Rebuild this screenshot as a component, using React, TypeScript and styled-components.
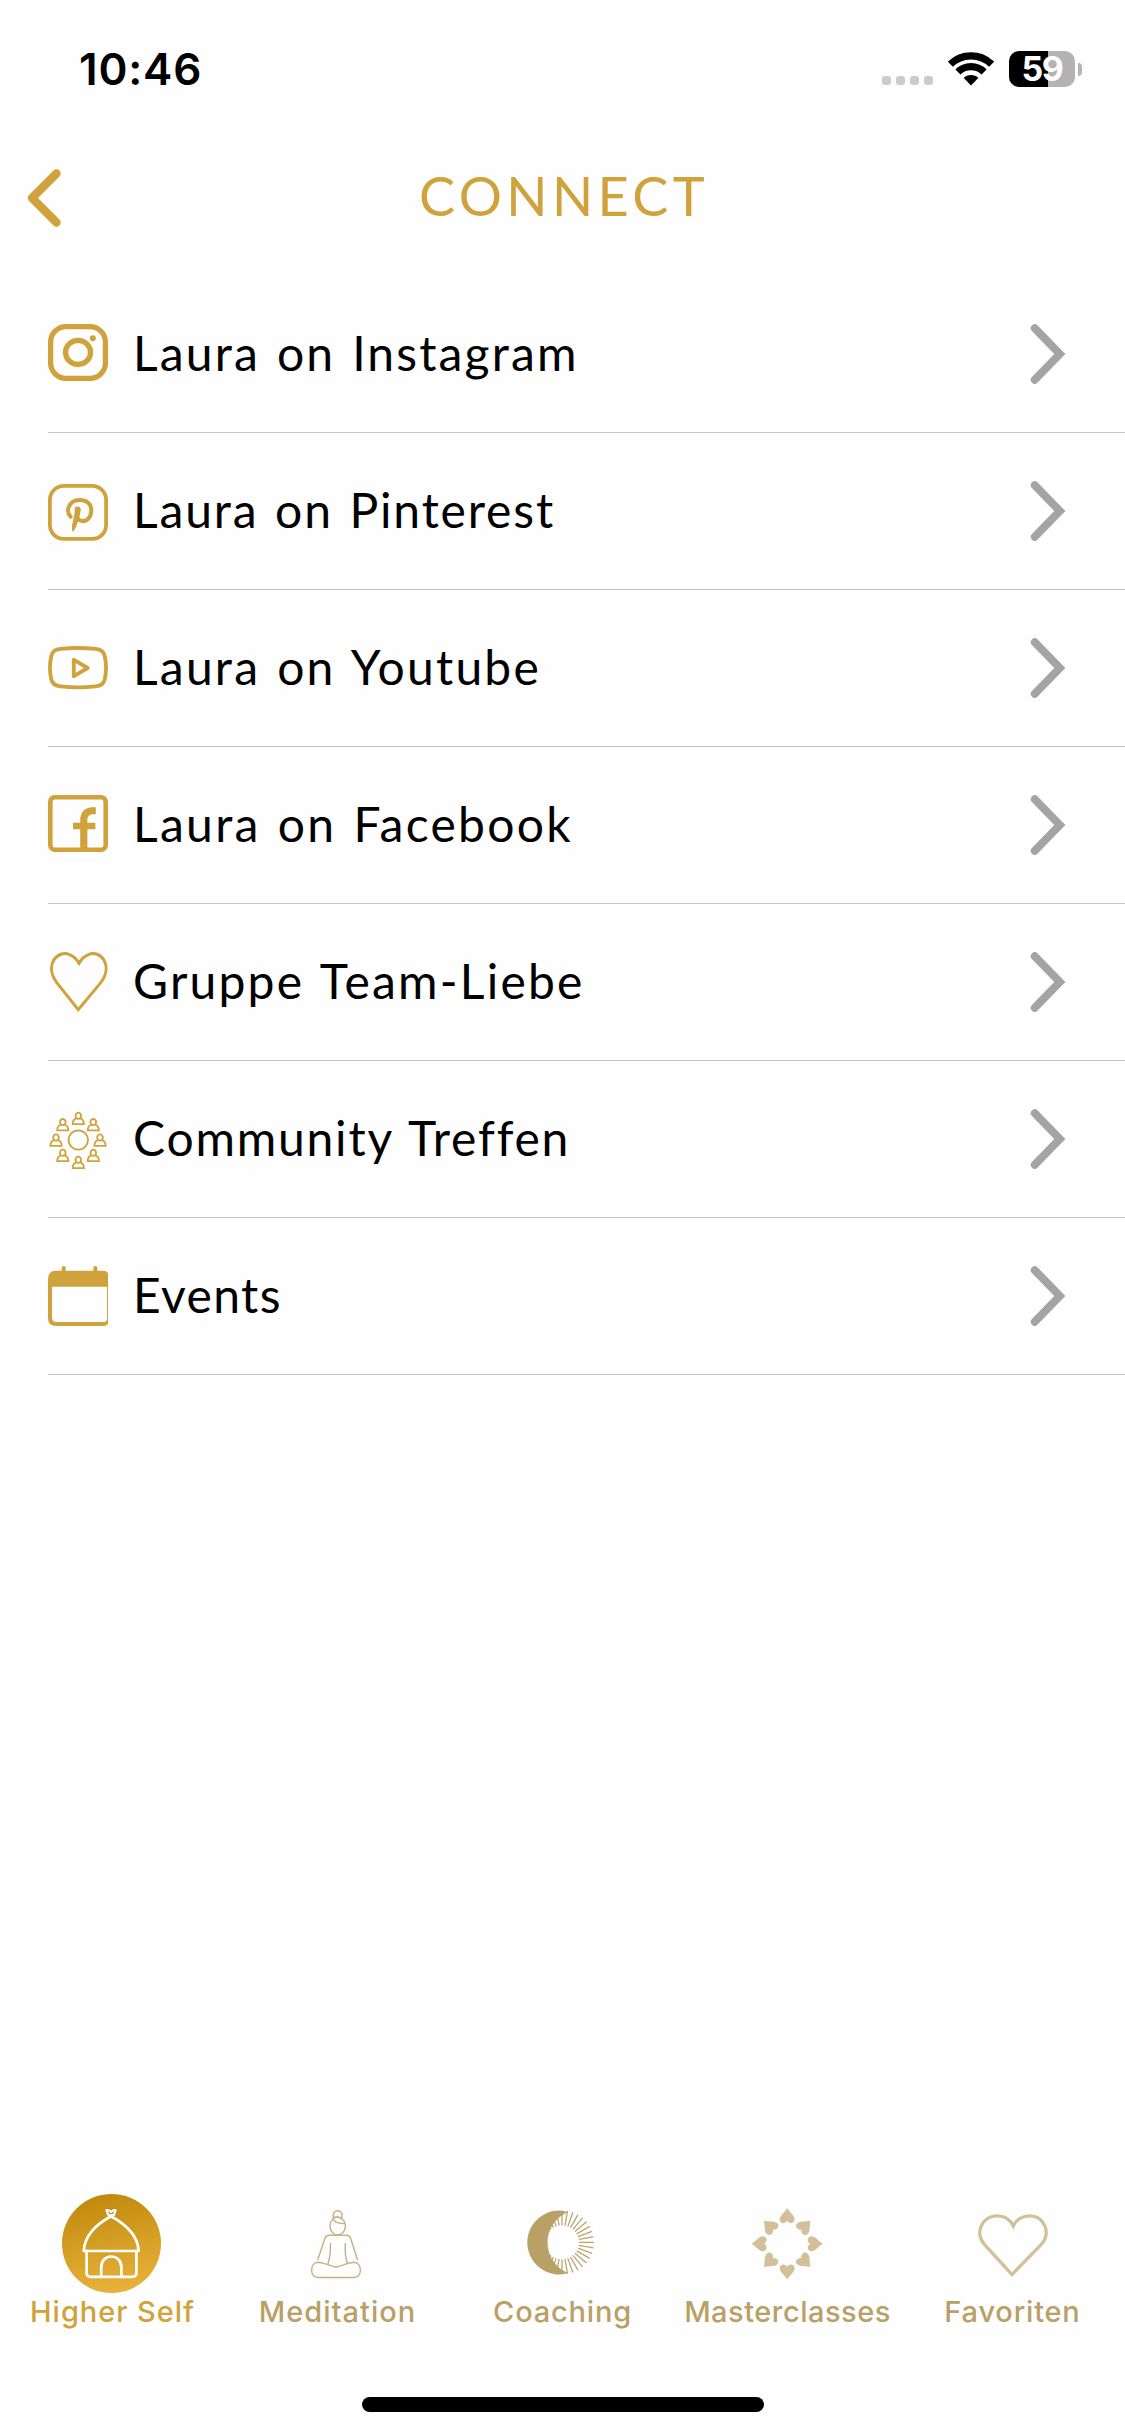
import React from "react";
import styled, { createGlobalStyle } from "styled-components";

const gold = "#cfa23c";
const sand = "#b9a067";
const paleSand = "#d3c09a";

const GlobalStyle = createGlobalStyle`
  html, body { margin: 0; padding: 0; background: #fefefe; }
  * { box-sizing: border-box; }
`;

const Screen = styled.div`
  display: flex;
  flex-direction: column;
  width: 1125px;
  height: 2436px;
  background: #fefefe;
  overflow: hidden;
`;

const StatusBar = styled.div`
  display: flex;
  align-items: center;
  justify-content: space-between;
  height: 138px;
  padding: 0 43px 0 79px;
`;

const Clock = styled.span`
  font: 600 44px/44px Inter, "Liberation Sans", sans-serif;
  letter-spacing: 0.8px;
  color: #000;
`;

const StatusIcons = styled.div`
  display: flex;
  align-items: center;
`;

const SignalDots = styled.div`
  display: flex;
  gap: 5px;
  margin: 23px 15px 0 0;
`;

const SignalDot = styled.span`
  width: 9px;
  height: 9px;
  border-radius: 3px;
  background: #cbcbcb;
`;

const WifiIcon = styled.svg`
  width: 46px;
  height: 34px;
  margin-right: 15px;
`;

const Battery = styled.div`
  display: flex;
  align-items: center;
  justify-content: center;
  width: 66px;
  height: 36px;
  border-radius: 10px;
  background: linear-gradient(90deg, #000 59%, #b3b3b3 59%);
  font: 700 34px/36px Inter, "Liberation Sans", sans-serif;
  letter-spacing: -1.4px;
  color: #fff;
`;

const BatteryNub = styled.span`
  width: 4px;
  height: 13px;
  margin-left: 3px;
  border-radius: 0 4px 4px 0;
  background: #b3b3b3;
`;

const Header = styled.header`
  display: grid;
  grid-template-columns: 120px 1fr 120px;
  align-items: center;
  height: 138px;
  padding-bottom: 18px;
`;

const BackIcon = styled.svg`
  width: 40px;
  height: 60px;
  margin-left: 24px;
`;

const Title = styled.h1`
  margin: 0;
  padding: 0 0 4px 3px;
  text-align: center;
  font: 400 54px/60px Lato, "Noto Sans", sans-serif;
  letter-spacing: 4.4px;
  color: ${gold};
`;

const List = styled.ul`
  flex: 1;
  margin: 0;
  padding: 0 0 0 48px;
  list-style: none;
`;

const Row = styled.li`
  display: flex;
  align-items: center;
  height: 157px;
  padding-right: 58px;
  border-bottom: 1px solid #c4c4c5;
`;

const RowIcon = styled.svg`
  flex: none;
  width: 60px;
  height: 60px;
  margin-right: 25px;
`;

const RowLabel = styled.span<{ $tracking: number }>`
  flex: 1;
  padding-bottom: 3px;
  white-space: nowrap;
  font: 400 48px/60px Lato, "Noto Sans", sans-serif;
  letter-spacing: ${(p) => p.$tracking}px;
  word-spacing: 2.5px;
  color: #000;
`;

const Chevron = styled.svg`
  flex: none;
  width: 38px;
  height: 60px;
`;

const TabBar = styled.nav`
  display: grid;
  grid-template-columns: repeat(5, 1fr);
  height: 203px;
`;

const Tab = styled.div<{ $active?: boolean }>`
  display: flex;
  flex-direction: column;
  align-items: center;
  font: 500 29px/38px Inter, "Liberation Sans", sans-serif;
  color: ${(p) => (p.$active ? gold : sand)};
`;

const TabIcon = styled.svg<{ $active?: boolean }>`
  width: 99px;
  height: 99px;
  margin-right: ${(p) => (p.$active ? 2 : 0)}px;
`;

const TabLabel = styled.span<{ $tracking: number }>`
  letter-spacing: ${(p) => p.$tracking}px;
  white-space: nowrap;
`;

const HomeArea = styled.div`
  display: flex;
  justify-content: center;
  height: 39px;
`;

const HomeIndicator = styled.span`
  width: 402px;
  height: 15px;
  border-radius: 8px;
  background: #000;
`;

const Instagram = () => (
  <g fill="none" stroke={gold} strokeWidth="5.3">
    <rect x="2.6" y="2.6" width="54.8" height="51.8" rx="15.5" />
    <ellipse cx="30" cy="28.4" rx="12.5" ry="12.1" />
    <circle cx="44.8" cy="14.3" r="3" fill={gold} stroke="none" />
  </g>
);

const Pinterest = () => (
  <g fill="none" stroke={gold}>
    <rect x="1.9" y="4.9" width="56.2" height="53" rx="14" strokeWidth="3.8" />
    <path d="M22.6 35.9C20.3 33.4 19.6 29.6 20.6 26.3C22.2 21.5 26.4 18.9 31.8 18.9C38.6 18.9 43.3 23 43.3 29C43.3 35.5 39.6 40.1 34.8 40.1C32 40.1 30 38.8 28.7 36.6" strokeWidth="4" strokeLinecap="round" />
    <path d="M26.6 27.5C27.2 24.6 33 24.4 32.8 29L31.4 36.5L28.8 43.8C28 46.6 26.6 49.2 24.9 51C23.8 49.2 23.7 46.3 24.2 43.5L26.8 31Z" fill={gold} stroke="none" />
  </g>
);

const Youtube = () => (
  <g fill="none" stroke={gold} strokeWidth="3.8" strokeLinejoin="round">
    <path d="M12.5 10.9Q30 9.1 47.5 10.9Q55.4 11.6 56.7 18Q59.4 29.7 56.7 41.5Q55.3 47.7 47.5 48.4Q30 50.2 12.5 48.4Q4.7 47.7 3.3 41.5Q.6 29.7 3.3 18Q4.6 11.6 12.5 10.9Z" />
    <path d="M25.8 21.8V38.2L39.7 30Z" />
  </g>
);

const Facebook = () => (
  <g>
    <rect x="2.3" y="2.3" width="55.4" height="52.4" rx="4.5" fill="none" stroke={gold} strokeWidth="4.6" />
    <path d="M32.2 55V34.3H25V27.7H32.2V25.5C32.2 17 37 12.2 44.5 12.2H47.8V19.3H45C41.4 19.3 39.4 21.4 39.4 25V27.7H47.4V34.3H39.4V55Z" fill={gold} />
  </g>
);

const HeartOutline = () => (
  <path d="M30.2 57.6L8.6 30.4C-4 13 9.5-3 22 2.8C26 4.4 29 7.6 31 11.2C33 7.6 36 4.4 40 2.8C52.5-3 65.5 13 53 30.4Z" fill="none" stroke={gold} strokeWidth="3" />
);

const peopleAt = [
  [30.3, 3], [45.3, 9.3], [52, 24.7], [45.3, 40],
  [30.3, 47], [14.8, 40], [8, 24.7], [14.8, 9.3],
];

const Community = () => (
  <g fill="none" stroke={gold} strokeWidth="1.8">
    <circle cx="30.3" cy="31" r="9.7" />
    {peopleAt.map(([x, y]) => (
      <g key={`${x}-${y}`} transform={`translate(${x} ${y})`}>
        <ellipse cx="0" cy="3.8" rx="2.8" ry="3.1" />
        <path d="M-2.3 6.7C-4.8 7.5-5.6 9.3-5.6 12.1H5.6C5.6 9.3 4.8 7.5 2.3 6.7" />
      </g>
    ))}
  </g>
);

const Calendar = () => (
  <g>
    <path d="M8 4.8H55Q58.5 4.8 60 7V58Q58.5 60 55 60H8Q0 60 0 52V12.8Q0 4.8 8 4.8Z" fill={gold} />
    <path d="M4 20.8H59V52.5Q59 56 55.5 56H8.5Q4 56 4 51.5Z" fill="#fefefe" />
    <path d="M15.7 2V7M47.3 2V7" stroke={gold} strokeWidth="4" strokeLinecap="round" />
  </g>
);

const Hut = () => (
  <g fill="none" stroke="#fff" strokeWidth="2.7" strokeLinejoin="round" strokeLinecap="round">
    <defs>
      <linearGradient id="sunrise" x1="0.4" y1="0" x2="0.6" y2="1">
        <stop offset="0" stopColor="#c18a0d" />
        <stop offset="1" stopColor="#e9b23c" />
      </linearGradient>
    </defs>
    <circle cx="49.5" cy="49.5" r="49.5" fill="url(#sunrise)" stroke="none" />
    <path d="M49 22.3C35 30 22.5 42 21.8 57H76.6C76 42 63 30 49 22.3Z" />
    <path d="M24.6 57V79Q24.6 82.8 28.5 82.8H70.5Q74.4 82.8 74.4 79V57" />
    <path d="M39.2 82.8V73.5C39.2 58.8 59.4 58.8 59.4 73.5V82.8" />
    <path d="M49 21.6L46.2 20.8L44.4 16.3Q47 15.4 49 18.2Q51 15.4 53.6 16.3L52 20.8Z" strokeWidth="2.2" />
  </g>
);

const Meditation = () => (
  <g fill="none" stroke="#c5b287" strokeWidth="1.45" strokeLinecap="round" strokeLinejoin="round">
    <path d="M45.3 23.4C43.7 15 54 14.8 54.2 21C54.2 22.2 53.8 23.2 53 24" />
    <ellipse cx="49.7" cy="32" rx="7.7" ry="9" />
    <path d="M45 25.2C47 28.6 51.5 29.8 56.6 29.4M46 23.4Q50 21.8 54 25" />
    <path d="M29.8 65.5L37 44.3Q38 41.4 41 41.3H58.6Q61.6 41.4 62.6 44.3L69.4 65.5" />
    <path d="M42.3 49.6Q43 61 39.8 70.2M57.4 49.6Q56.4 60.5 59.4 69.4" />
    <path d="M29.5 68.3C21.5 69.5 21.5 83.4 30 83.4H66C74.5 83.4 74.5 69.5 66.5 68.3C60.5 68.5 54 71.8 48 73.2C42 71.8 35.5 68.5 29.5 68.3Z" />
  </g>
);

const rays = Array.from({ length: 27 }, (_, i) => (i - 13) * 10);

const SunMoon = () => (
  <g>
    {rays.map((deg) => (
      <path key={deg} d="M17 0H32" transform={`translate(49 48.4) rotate(${deg})`} stroke="#bca66f" strokeWidth="1.3" />
    ))}
    <path d="M56 17.9A31.9 31.9 0 1 0 56 79.1A33 33 0 0 1 56 17.9Z" transform="translate(-0.8 0)" fill={sand} />
  </g>
);

const petals = [0, 45, 90, 135, 180, 225, 270, 315];

const HeartWreath = () => (
  <g fill={paleSand}>
    {petals.map((deg) => (
      <path
        key={deg}
        transform={`translate(49.2 49.8) rotate(${deg}) translate(0 ${deg % 90 ? 2.7 : 0})`}
        d="M0-35.8C2.2-31.4 7.5-28.5 7.5-24.2C7.5-20.2 2-19.2 0-23C-2-19.2-7.5-20.2-7.5-24.2C-7.5-28.5-2.2-31.4 0-35.8Z"
      />
    ))}
  </g>
);

const Favourite = () => (
  <path d="M49 80.6L21.8 50.8C11 38.5 19.5 21.8 34 21.8C41.5 21.8 47.5 26 50.3 32C53 26 59.3 21.8 66.8 21.8C81 21.8 88.5 38.5 78.5 50.2Z" fill="none" stroke={paleSand} strokeWidth="3.3" />
);

const rows = [
  { label: "Laura on Instagram", icon: <Instagram />, tracking: 2.15 },
  { label: "Laura on Pinterest", icon: <Pinterest />, tracking: 1.85 },
  { label: "Laura on Youtube", icon: <Youtube />, tracking: 2.2 },
  { label: "Laura on Facebook", icon: <Facebook />, tracking: 2.3 },
  { label: "Gruppe Team-Liebe", icon: <HeartOutline />, tracking: 2.2 },
  { label: "Community Treffen", icon: <Community />, tracking: 1.8 },
  { label: "Events", icon: <Calendar />, tracking: 1.4 },
];

const tabs = [
  { label: "Higher Self", icon: <Hut />, tracking: 0.95, active: true },
  { label: "Meditation", icon: <Meditation />, tracking: 1 },
  { label: "Coaching", icon: <SunMoon />, tracking: 0.8 },
  { label: "Masterclasses", icon: <HeartWreath />, tracking: 0.5 },
  { label: "Favoriten", icon: <Favourite />, tracking: 0.8 },
];

export default function App() {
  return (
    <>
      <GlobalStyle />
      <Screen>
        <StatusBar>
          <Clock>10:46</Clock>
          <StatusIcons>
            <SignalDots>
              <SignalDot />
              <SignalDot />
              <SignalDot />
              <SignalDot />
            </SignalDots>
            <WifiIcon viewBox="0 0 46 34">
              <clipPath id="wedge">
                <path d="M23 33.5L-11-1.5V-10H57V-1.5Z" />
              </clipPath>
              <g clipPath="url(#wedge)" fill="none" stroke="#000" strokeWidth="7.2">
                <circle cx="23" cy="33.5" r="29.6" />
                <circle cx="23" cy="33.5" r="18.8" />
                <circle cx="23" cy="33.5" r="10.6" fill="#000" stroke="none" />
              </g>
            </WifiIcon>
            <Battery>59</Battery>
            <BatteryNub />
          </StatusIcons>
        </StatusBar>
        <Header>
          <BackIcon viewBox="0 0 40 60">
            <path d="M32.5 5.5L8 30L32.5 54.5" fill="none" stroke={gold} strokeWidth="8.4" strokeLinecap="round" strokeLinejoin="round" />
          </BackIcon>
          <Title>CONNECT</Title>
        </Header>
        <List>
          {rows.map((row) => (
            <Row key={row.label}>
              <RowIcon viewBox="0 0 60 60">{row.icon}</RowIcon>
              <RowLabel $tracking={row.tracking}>{row.label}</RowLabel>
              <Chevron viewBox="0 0 38 60">
                <path d="M5.8 4.2L30.8 30L5.8 55.8" fill="none" stroke="#a4a4a6" strokeWidth="8" strokeLinecap="round" />
              </Chevron>
            </Row>
          ))}
        </List>
        <TabBar>
          {tabs.map((tab) => (
            <Tab key={tab.label} $active={tab.active}>
              <TabIcon viewBox="0 0 99 99" $active={tab.active}>{tab.icon}</TabIcon>
              <TabLabel $tracking={tab.tracking}>{tab.label}</TabLabel>
            </Tab>
          ))}
        </TabBar>
        <HomeArea>
          <HomeIndicator />
        </HomeArea>
      </Screen>
    </>
  );
}
